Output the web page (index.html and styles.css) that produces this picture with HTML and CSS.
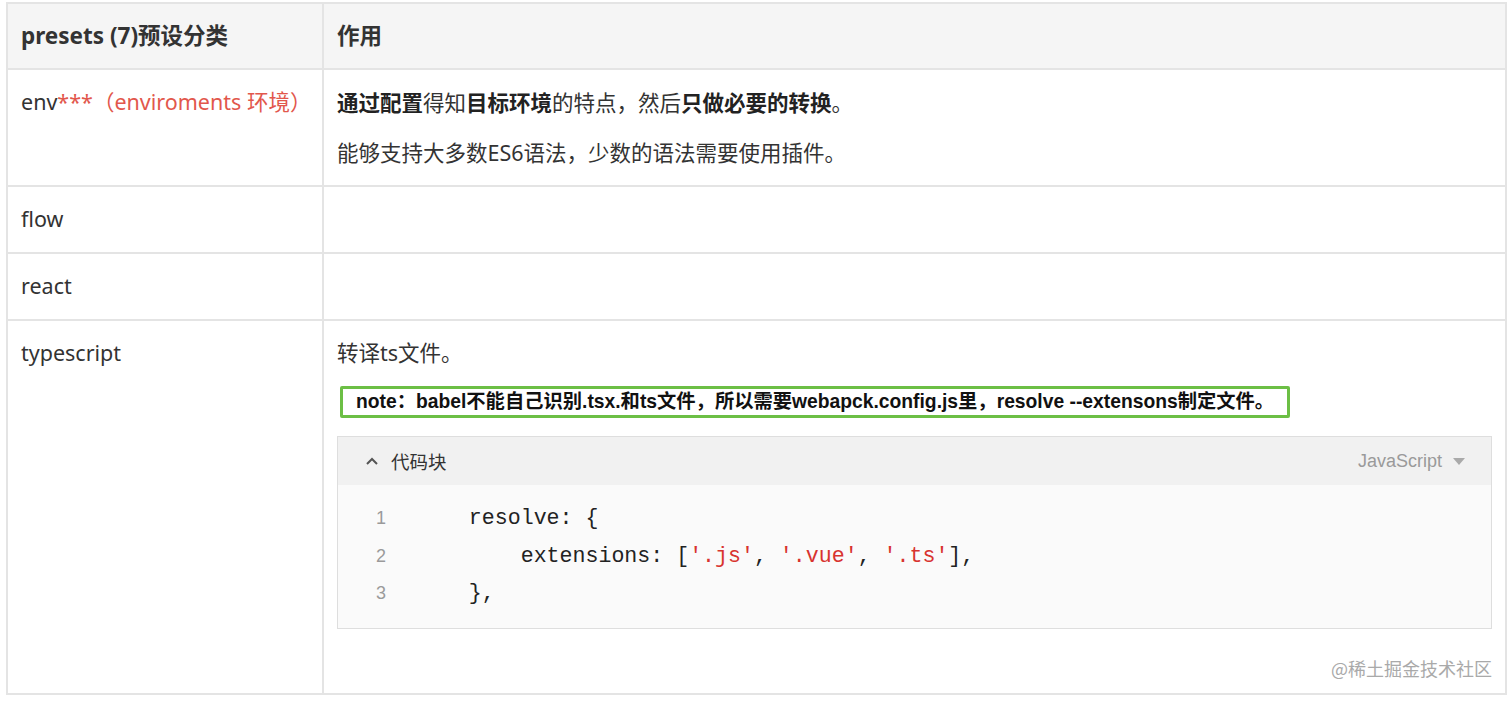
FILE: index.html
```html
<!DOCTYPE html>
<html lang="zh-CN">
<head>
<meta charset="utf-8">
<title>presets</title>
<link rel="stylesheet" href="styles.css">
</head>
<body>
<div class="page">
  <table class="grid">
    <thead>
      <tr>
        <th class="c1">presets (7)预设分类</th>
        <th class="c2">作用</th>
      </tr>
    </thead>
    <tbody>
      <tr>
        <td class="c1">env<span class="red">***（enviroments 环境）</span></td>
        <td class="c2">
          <p><b>通过配置</b>得知<b>目标环境</b>的特点，然后<b>只做必要的转换</b>。</p>
          <p>能够支持大多数ES6语法，少数的语法需要使用插件。</p>
        </td>
      </tr>
      <tr>
        <td class="c1">flow</td>
        <td class="c2"></td>
      </tr>
      <tr>
        <td class="c1">react</td>
        <td class="c2"></td>
      </tr>
      <tr>
        <td class="c1">typescript</td>
        <td class="c2 last">
          <p>转译ts文件。</p>
          <div class="note">note：babel不能自己识别.tsx.和ts文件，所以需要webapck.config.js里，resolve --extensons制定文件。</div>
          <div class="codeblock">
            <div class="code-head">
              <div class="code-title">
                <svg class="chev" width="14" height="10" viewBox="0 0 14 10"><polyline points="2,8 7,3 12,8" fill="none" stroke="#555" stroke-width="2"/></svg>
                <span>代码块</span>
              </div>
              <div class="lang">JavaScript <span class="caret"></span></div>
            </div>
            <div class="code-body">
              <div class="gutter">
                <div>1</div>
                <div>2</div>
                <div>3</div>
              </div>
              <pre class="code"><code class="line">    resolve: {</code>
<code class="line">        extensions: [<span class="str">'.js'</span>, <span class="str">'.vue'</span>, <span class="str">'.ts'</span>],</code>
<code class="line">    },</code></pre>
            </div>
          </div>
        </td>
      </tr>
    </tbody>
  </table>
  <div class="watermark">@稀土掘金技术社区</div>
</div>
</body>
</html>
```
FILE: styles.css
```css
html, body {
  margin: 0;
  padding: 0;
  background: #fff;
}
.page {
  position: relative;
  width: 1512px;
  height: 701px;
  padding: 2px 0 0 6px;
  box-sizing: border-box;
  font-family: "Noto Sans", "Noto Sans CJK SC", sans-serif;
  color: #333;
}
.grid {
  width: 1501px;
  border-collapse: collapse;
  table-layout: fixed;
}
.grid th, .grid td {
  border: 2px solid #e4e4e4;
  padding: 15px 13px 17px;
  text-align: left;
  vertical-align: top;
  font-size: 21.5px;
  line-height: 33px;
}
.grid th {
  background: #f5f5f5;
  font-weight: 700;
  font-size: 22.5px;
  padding-top: 15px;
  padding-bottom: 16px;
  color: #333;
}
.c1 { width: 288px; }
.grid td.c2 { padding-top: 16px; padding-bottom: 16px; }
.grid td.c2.last { padding-top: 15px; padding-bottom: 64px; }
.grid p {
  margin: 0 0 17px;
}
.grid p:last-child { margin-bottom: 0; }
.grid b { font-weight: 700; color: #222; }
.red { color: #e2574c; }

.note {
  display: block;
  width: fit-content;
  margin: 0 0 0 3px;
  border: 3px solid #6cbf45;
  border-radius: 2px;
  padding: 0 13px;
  font-family: "Liberation Sans", "Noto Sans CJK SC", sans-serif;
  font-weight: 700;
  font-size: 19.3px;
  line-height: 26px;
  color: #111;
}

.codeblock {
  margin-top: 18px;
  border: 1px solid #dedede;
  background: #fafafa;
}
.code-head {
  height: 48px;
  background: #f1f1f1;
  display: flex;
  align-items: center;
  justify-content: space-between;
  padding: 0 26px 0 27px;
}
.code-title {
  display: flex;
  align-items: center;
  gap: 12px;
  font-size: 18.5px;
  color: #333;
}
.chev { display: block; }
.lang {
  display: flex;
  align-items: center;
  gap: 11px;
  font-family: "Liberation Sans", sans-serif;
  font-size: 18px;
  color: #9a9a9a;
}
.caret {
  width: 0;
  height: 0;
  border-left: 6px solid transparent;
  border-right: 6px solid transparent;
  border-top: 7px solid #aaa;
}
.code-body {
  display: flex;
  padding: 15px 0 15px;
}
.gutter {
  width: 48px;
  padding-right: 31px;
  text-align: right;
  font-family: "Liberation Sans", sans-serif;
  font-size: 18px;
  line-height: 37.5px;
  color: #9a9a9a;
}
.code {
  margin: 0;
  font-family: "Liberation Mono", monospace;
  font-size: 21.6px;
  line-height: 37.5px;
  color: #222;
}
.line { font-family: inherit; }
.str { color: #d8332f; }

.watermark {
  position: absolute;
  right: 20px;
  bottom: 20px;
  font-family: "Noto Sans CJK SC", sans-serif;
  font-size: 18px;
  color: #a9a9a9;
}
```
